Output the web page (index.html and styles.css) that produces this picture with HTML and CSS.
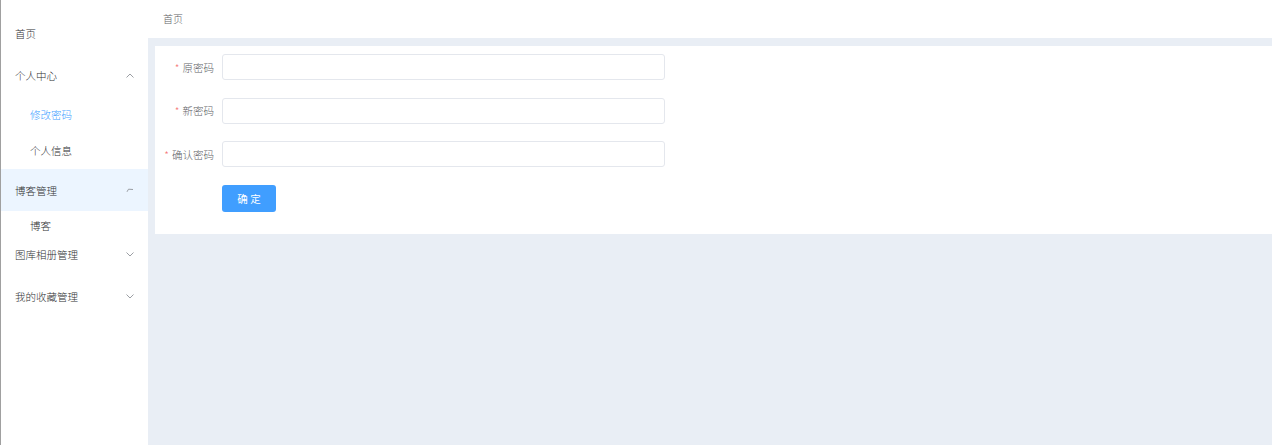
FILE: index.html
```html
<!DOCTYPE html>
<html lang="zh-CN">
<head>
    <meta charset="UTF-8">
    <meta name="viewport" content="width=device-width, initial-scale=1.0">
    <title>修改密码</title>
    <link rel="stylesheet" href="styles.css">
</head>
<body>
    <div class="layout">
        <!-- Sidebar menu -->
        <aside class="sidebar">
            <div class="menu-item">首页</div>

            <div class="submenu">
                <div class="submenu-title">
                    <span>个人中心</span>
                    <svg class="arrow" width="8" height="5" viewBox="0 0 8 5"><path d="M0.5 4.5 L4 1 L7.5 4.5" fill="none" stroke="#909399" stroke-width="0.9"/></svg>
                </div>
                <div class="sub-item active">修改密码</div>
                <div class="sub-item">个人信息</div>
            </div>

            <div class="submenu">
                <div class="submenu-title hover">
                    <span>博客管理</span>
                    <svg class="arrow" width="8" height="5" viewBox="0 0 8 5"><path d="M1 3.8 L2.5 1.2 L7 1.5" fill="none" stroke="#909399" stroke-width="0.9"/></svg>
                </div>
                <!-- submenu caught mid-collapse -->
                <div class="sub-list collapsing">
                    <div class="sub-item">博客</div>
                </div>
            </div>

            <div class="submenu">
                <div class="submenu-title">
                    <span>图库相册管理</span>
                    <svg class="arrow" width="8" height="5" viewBox="0 0 8 5"><path d="M0.5 0.5 L4 4 L7.5 0.5" fill="none" stroke="#909399" stroke-width="0.9"/></svg>
                </div>
            </div>

            <div class="submenu">
                <div class="submenu-title">
                    <span>我的收藏管理</span>
                    <svg class="arrow" width="8" height="5" viewBox="0 0 8 5"><path d="M0.5 0.5 L4 4 L7.5 0.5" fill="none" stroke="#909399" stroke-width="0.9"/></svg>
                </div>
            </div>
        </aside>

        <main class="main">
            <header class="header">首页</header>

            <div class="content">
                <div class="card">
                    <form class="pwd-form">
                        <div class="form-row">
                            <label class="form-label"><span class="required">*</span>原密码</label>
                            <input class="form-input" type="password">
                        </div>
                        <div class="form-row">
                            <label class="form-label"><span class="required">*</span>新密码</label>
                            <input class="form-input" type="password">
                        </div>
                        <div class="form-row">
                            <label class="form-label"><span class="required">*</span>确认密码</label>
                            <input class="form-input" type="password">
                        </div>
                        <div class="form-row">
                            <span class="form-label"></span>
                            <button class="btn-primary" type="button">确 定</button>
                        </div>
                    </form>
                </div>
            </div>
        </main>
    </div>
</body>
</html>
```

FILE: styles.css
```css
body {
    margin: 0;
    font-family: "Noto Sans CJK SC", "Noto Sans", sans-serif;
    font-size: 10.5px;
    font-weight: 300;
    color: #303133;
    background-color: #e9eef5;
}

.layout {
    display: flex;
    height: 445px;
}

/* Sidebar */
.sidebar {
    width: 147px;
    flex-shrink: 0;
    border-left: 1px solid #a0a0a0;
    background-color: #fff;
    padding-top: 12px;
}

.menu-item,
.submenu-title {
    height: 42px;
    display: flex;
    align-items: center;
    padding-left: 14px;
    padding-right: 14px;
    color: #303133;
}

.submenu-title {
    justify-content: space-between;
}

.submenu-title.hover {
    background-color: #ecf5ff;
}

.arrow {
    display: block;
}

.sub-item {
    height: 36.5px;
    display: flex;
    align-items: center;
    padding-left: 29px;
    color: #303133;
}

.sub-item.active {
    color: #409eff;
}

.sub-list.collapsing {
    height: 22px;
}

.sub-list.collapsing .sub-item {
    height: 22px;
    align-items: flex-end;
    line-height: 14px;
}

/* Main area */
.main {
    flex: 1;
    display: flex;
    flex-direction: column;
}

.header {
    height: 38px;
    background-color: #fff;
    display: flex;
    align-items: center;
    padding-left: 15px;
    padding-bottom: 1px;
    box-sizing: border-box;
    color: #606266;
    font-size: 10px;
}

.content {
    padding: 8px 0 0 7px;
}

.card {
    background-color: #fff;
    height: 180px;
    padding-top: 8px;
}

.form-row {
    display: flex;
    align-items: center;
    margin-bottom: 17.5px;
}

.form-label {
    width: 59px;
    padding-right: 8px;
    text-align: right;
    color: #606266;
    flex-shrink: 0;
}

.required {
    color: #f56c6c;
    margin-right: 3px;
}

.form-input {
    width: 443px;
    height: 26px;
    box-sizing: border-box;
    border: 1px solid #e4e7ed;
    border-radius: 3px;
    outline: none;
    margin: 0;
}

.btn-primary {
    width: 54px;
    height: 27px;
    background-color: #409eff;
    border: none;
    border-radius: 3px;
    color: #fff;
    font-family: inherit;
    font-size: 10.5px;
    cursor: pointer;
    padding: 0;
    margin: 0;
}
```
